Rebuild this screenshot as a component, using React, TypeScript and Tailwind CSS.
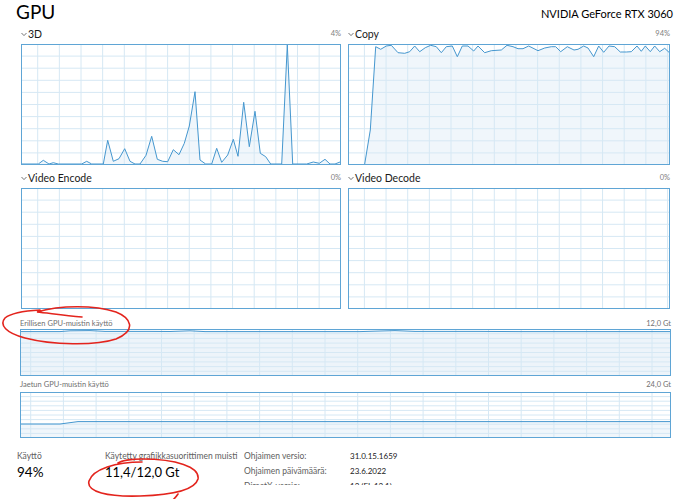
import React from "react";

type P = [number, number];

const BORDER = "#5fa5d5";
const LINE = "#4597cf";
const FILL = "#e6f0f8";
const GRID = "#d6e8f4";

function Graph({
  w,
  h,
  vOff,
  vStep,
  rows,
  points,
  fillOpacity = 0.6,
}: {
  w: number;
  h: number;
  vOff: number;
  vStep: number;
  rows: number;
  points?: P[];
  fillOpacity?: number;
}) {
  const vLines: number[] = [];
  for (let x = vOff; x < w - 1; x += vStep) vLines.push(x);
  const hLines: number[] = [];
  for (let i = 1; i < rows; i++) hLines.push((h / rows) * i);
  const pts = points ? points.map((p) => `${p[0].toFixed(1)},${p[1].toFixed(1)}`).join(" ") : "";
  const poly = points
    ? `${points[0][0].toFixed(1)},${h} ${pts} ${points[points.length - 1][0].toFixed(1)},${h}`
    : "";
  return (
    <svg width={w} height={h} className="block">
      <rect x={0} y={0} width={w} height={h} fill="#ffffff" />
      {points && <polygon points={poly} fill={FILL} fillOpacity={fillOpacity} />}
      {vLines.map((x, i) => (
        <line key={"v" + i} x1={x} y1={0} x2={x} y2={h} stroke={GRID} strokeWidth={1} />
      ))}
      {hLines.map((y, i) => (
        <line key={"h" + i} x1={0} y1={y} x2={w} y2={y} stroke={GRID} strokeWidth={1} />
      ))}
      {points && <polyline points={pts} fill="none" stroke={LINE} strokeWidth={1} strokeLinejoin="round" />}
      <rect x={0.5} y={0.5} width={w - 1} height={h - 1} fill="none" stroke={BORDER} strokeWidth={1} />
    </svg>
  );
}

const raw3D: P[] = [
  [63, 496], [115, 496], [130, 481], [147, 495], [160, 488], [175, 495], [245, 496], [260, 484],
  [275, 495], [310, 496], [323, 421], [340, 484], [357, 476], [374, 446], [390, 484], [405, 496],
  [420, 492], [438, 466], [455, 409], [472, 478], [488, 484], [503, 485], [520, 449], [537, 464],
  [553, 430], [568, 378], [585, 275], [600, 480], [617, 496], [635, 496], [650, 445], [665, 487],
  [683, 465], [700, 418], [714, 469], [731, 307], [748, 440], [765, 334], [781, 460], [797, 470],
  [812, 496], [845, 496], [862, 135], [878, 496], [900, 494], [920, 496], [940, 486], [958, 490],
  [975, 478], [990, 493], [1005, 496], [1020, 486],
];
const pts3D: P[] = raw3D.map(([x, y]) => [Math.min(x / 3 - 21, 319), Math.min(y / 3 - 44, 120)]);

const rawCopy: P[] = [
  [80, 496], [97, 390], [113, 140], [128, 148], [145, 138], [160, 136], [180, 158], [200, 160],
  [215, 155], [230, 138], [245, 155], [262, 143], [278, 136], [295, 140], [310, 158], [325, 140],
  [343, 138], [358, 170], [373, 138], [390, 138], [407, 153], [420, 138], [440, 158], [460, 152],
  [490, 150], [507, 136], [525, 140], [540, 146], [555, 146], [572, 138], [600, 152], [620, 144],
  [640, 140], [653, 140], [668, 155], [688, 140], [708, 150], [720, 148], [737, 138], [750, 144],
  [767, 170], [782, 138], [797, 157], [813, 138], [830, 140], [847, 156], [865, 156], [880, 155],
  [897, 138], [910, 154], [922, 138], [937, 155], [950, 138], [965, 155], [980, 145], [995, 157],
];
const ptsCopy: P[] = rawCopy.map(([x, y]) => [Math.min(338 + x / 3 - 348, 321), Math.min(y / 3 - 44, 120)]);

const ptsDedicated: P[] = [
  [0, 2.6], [40, 2.6], [50, 1.8], [70, 1.6], [85, 2.4], [130, 2.4], [150, 2.5], [170, 1.8],
  [185, 2.6], [260, 2.6], [300, 2.6], [340, 2.6], [360, 2.0], [375, 1.6], [395, 2.4], [460, 2.4],
  [500, 2.6], [600, 2.6], [651, 2.6],
];
const ptsShared: P[] = [
  [0, 32], [40, 32], [58, 29.6], [100, 29.6], [651, 29.6],
];

function Chevron() {
  return (
    <svg width="6" height="5" className="mr-[1px] mt-[1px]">
      <polyline points="0.5,1 3,3.6 5.5,1" fill="none" stroke="#666" strokeWidth="0.9" />
    </svg>
  );
}

function GraphCell({
  title,
  pct,
  w,
  points,
  vOff,
  first,
}: {
  title: string;
  pct: string;
  w: number;
  points?: P[];
  vOff: number;
  first?: boolean;
}) {
  return (
    <div className="flex flex-col" style={{ width: w }}>
      <div className={`flex items-center justify-between h-[12px] mb-[4px] ${first ? "" : "mt-[7px]"}`}>
        <div className="flex items-center text-[10.5px] leading-[12px] text-[#1a1a1a]">
          <Chevron />
          <span>{title}</span>
        </div>
        <span className="text-[7.5px] leading-[10px] text-[#808080]">{pct}</span>
      </div>
      <Graph w={w} h={121} vOff={vOff} vStep={21.65} rows={10} points={points} />
    </div>
  );
}

function Annotations() {
  return (
    <svg width="678" height="499" className="absolute left-0 top-0 pointer-events-none">
      <path
        d="M 82,317 C 62,315 47,313 37,312 C 60,305 95,305 116,312 C 131,318 137,330 116,339 C 95,346 52,345 25,338 C 6,333 -1,325 5,318 C 11,313 22,311 40,310"
        fill="none"
        stroke="#e3241d"
        strokeWidth="1.6"
        strokeLinecap="round"
      />
      <path
        d="M 142,462 C 116,462 93,469 89,481 C 86,492 108,497 140,496 C 171,495 195,490 198,479 C 200,467 176,459 142,459 C 131,459 121,461 118,463 M 178,494 C 176,497 174,499 172,501"
        fill="none"
        stroke="#e3241d"
        strokeWidth="1.6"
        strokeLinecap="round"
      />
    </svg>
  );
}

export default function App() {
  return (
    <div className="relative w-[678px] h-[499px] overflow-hidden bg-white font-['Lato','Noto_Sans',sans-serif] text-[#1a1a1a]">
      <div className="flex items-start justify-between h-[28px] pl-[16px] pr-[5px]">
        <div className="text-[19px] leading-[24px] text-black">GPU</div>
        <div className="text-[11px] leading-[16px] pt-[6px] text-black">NVIDIA GeForce RTX 3060</div>
      </div>

      <div className="flex flex-col pl-[21px]">
        <div className="flex gap-x-[7px]">
          <GraphCell title="3D" pct="4%" w={320} points={pts3D} vOff={16.7} first />
          <GraphCell title="Copy" pct="94%" w={322} points={ptsCopy} vOff={16.4} first />
        </div>
        <div className="flex gap-x-[7px]">
          <GraphCell title="Video Encode" pct="0%" w={320} vOff={16.7} />
          <GraphCell title="Video Decode" pct="0%" w={322} vOff={16.4} />
        </div>
      </div>

      <div className="flex flex-col pl-[20px] w-[671px]">
        <div className="flex items-center justify-between h-[10px] mt-[10px] text-[7.5px] leading-[10px] text-[#707070]">
          <span>Erillisen GPU-muistin käyttö</span>
          <span>12,0 Gt</span>
        </div>
        <Graph w={651} h={47} vOff={10.7} vStep={32.7} rows={10} points={ptsDedicated} fillOpacity={0.7} />
        <div className="flex items-center justify-between h-[10px] mt-[4px] mb-[2px] text-[7.5px] leading-[10px] text-[#707070]">
          <span>Jaetun GPU-muistin käyttö</span>
          <span>24,0 Gt</span>
        </div>
        <Graph w={651} h={46} vOff={10.7} vStep={32.7} rows={10} points={ptsShared} />
      </div>

      <div className="flex h-[36px] mt-[11px] overflow-hidden">
        <div className="flex flex-col pl-[17px] w-[105px]">
          <span className="text-[8.5px] leading-[15px] text-[#606060]">Käyttö</span>
          <span className="text-[13.5px] leading-[17px] text-black">94%</span>
        </div>
        <div className="flex flex-col w-[139px]">
          <span className="text-[8.5px] leading-[15px] text-[#606060] whitespace-nowrap">Käytetty grafiikkasuorittimen muisti</span>
          <span className="text-[13px] leading-[17px] text-black">11,4/12,0 Gt</span>
        </div>
        <div className="flex flex-col w-[106px] text-[8.5px] leading-[15px] text-[#606060]">
          <span>Ohjaimen versio:</span>
          <span>Ohjaimen päivämäärä:</span>
          <span>DirectX-versio:</span>
        </div>
        <div className="flex flex-col text-[8px] leading-[15px] text-[#1a1a1a]">
          <span>31.0.15.1659</span>
          <span>23.6.2022</span>
          <span>12 (FL 12.1)</span>
        </div>
      </div>

      <Annotations />
    </div>
  );
}
